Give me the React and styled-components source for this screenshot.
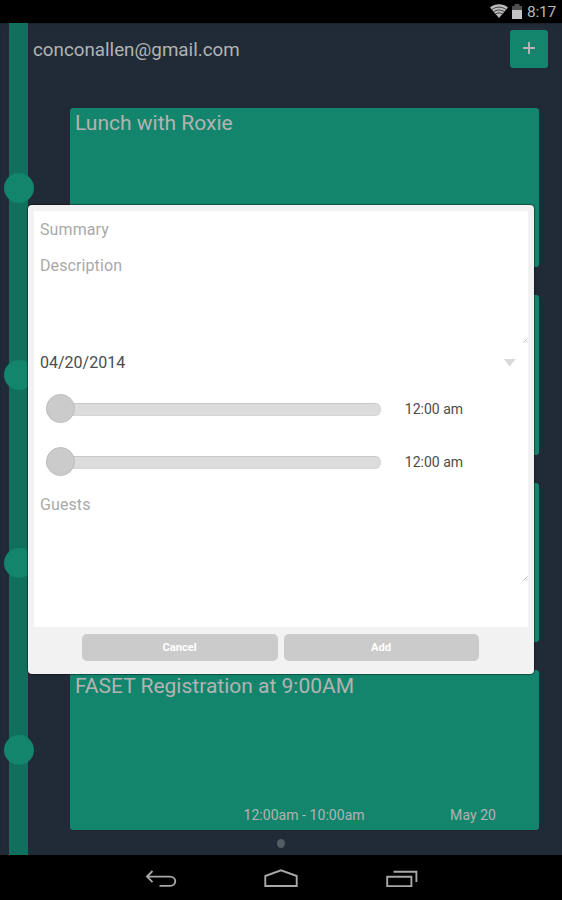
import React from "react";
import styled, { createGlobalStyle } from "styled-components";

const GlobalStyle = createGlobalStyle`
  *, *::before, *::after { box-sizing: border-box; }
  body { margin: 0; background: #000; font-family: Roboto, "Liberation Sans", sans-serif; }
`;

const Screen = styled.div`
  display: flex;
  flex-direction: column;
  width: 562px;
  height: 900px;
  overflow: hidden;
  background: #000;
`;

const StatusBar = styled.header`
  display: flex;
  justify-content: flex-end;
  flex: none;
  height: 23px;
  padding: 4px 6px 0 0;
  svg { display: block; flex: none; }
`;

const StatusIcons = styled.span`
  display: flex;
  gap: 4.3px;
`;

const Clock = styled.time`
  margin-left: 5px;
  font-size: 15.5px;
  line-height: 17px;
  letter-spacing: -0.2px;
  color: #b8b8b8;
`;

const Main = styled.main`
  position: relative;
  display: flex;
  flex: none;
  height: 832px;
  overflow: hidden;
  background: #202b37;
  box-shadow: inset 0 1px 1px #18232c;
`;

const Rail = styled.div`
  display: flex;
  flex-direction: column;
  align-items: center;
  flex: none;
  gap: 157.5px;
  width: 18.7px;
  margin-left: 9.3px;
  padding-top: 149.5px;
  background: #11705d;
`;

const RailDot = styled.span`
  flex: none;
  width: 30px;
  height: 30px;
  border-radius: 50%;
  background: #13856d;
`;

const Content = styled.div`
  display: flex;
  flex-direction: column;
  flex: 1;
`;

const AccountBar = styled.div`
  display: flex;
  justify-content: space-between;
  flex: none;
  height: 84.7px;
  padding: 7px 14px 0 5px;
`;

const Email = styled.span`
  margin-top: 8px;
  font-size: 18.8px;
  line-height: 24px;
  color: #b3b3b3;
`;

const PlusButton = styled.button`
  display: grid;
  place-items: center;
  width: 37.7px;
  height: 37.6px;
  padding: 0;
  border: 0;
  border-radius: 3px;
  background: #13856d;
`;

const EventList = styled.div`
  display: flex;
  flex-direction: column;
  gap: 28px;
  margin-left: 42px;
  width: 469px;
`;

const EventCard = styled.article`
  display: flex;
  flex-direction: column;
  justify-content: space-between;
  height: 159.5px;
  padding: 2.4px 5px 5px;
  border-radius: 3px;
  background: #13856d;
  color: #b3b3b3;
`;

const EventTitle = styled.h2`
  margin: 0;
  font-size: 21px;
  font-weight: 400;
  line-height: 27px;
`;

const EventMeta = styled.div`
  display: flex;
  justify-content: space-between;
  padding: 0 38px 0 168.5px;
  font-size: 14px;
  line-height: 19px;
  letter-spacing: 0.05px;
`;

const PageDot = styled.span`
  width: 8px;
  height: 9px;
  margin: 9px 0 0 249px;
  border-radius: 50%;
  background: #545c65;
`;

const Dialog = styled.section`
  position: absolute;
  top: 182.3px;
  left: 28px;
  width: 506px;
  height: 468.7px;
  padding: 6px 6px 0;
  border-radius: 4px;
  background: #f2f2f2;
  box-shadow: 0 0 1px 1px rgba(0, 0, 0, 0.4);
`;

const Form = styled.form`
  display: flex;
  flex-direction: column;
  height: 416px;
  padding-left: 6px;
  background: #fff;
  font-size: 16px;
  line-height: 20px;
  color: #4c4c4c;
`;

const Field = styled.div`
  display: flex;
  justify-content: space-between;
  flex: none;
  height: ${(p) => p.$height}px;
  padding-top: ${(p) => p.$top}px;
  color: ${(p) => (p.$filled ? "#4c4c4c" : "#a9a9a9")};
  letter-spacing: ${(p) => (p.$filled ? 0 : 0.1)}px;
`;

const Resizer = styled.svg`
  align-self: flex-end;
  flex: none;
  width: 5px;
  height: 5px;
  margin-bottom: 1px;
`;

const Caret = styled.span`
  width: 12px;
  height: 7.5px;
  margin: 6px 12.3px 0 0;
  background: #dadada;
  clip-path: polygon(0 0, 100% 0, 50% 100%);
`;

const SliderRow = styled.div`
  display: flex;
  align-items: center;
  flex: none;
  height: ${(p) => p.$height}px;
  padding-left: 6px;
`;

const Track = styled.div`
  display: flex;
  align-items: center;
  width: 335px;
  height: 12.5px;
  border: 1px solid #d6d6d6;
  border-top-color: #c8c8c8;
  border-radius: 6px;
  background: #dcdcdc;
`;

const Thumb = styled.span`
  width: 29.3px;
  height: 29.3px;
  margin-left: -1px;
  margin-top: -1.6px;
  flex: none;
  border: 1px solid #bdbdbd;
  border-radius: 50%;
  background: #cbcbcb;
`;

const SliderTime = styled.span`
  margin: 0 0 0 23.8px;
  font-size: 14px;
`;

const Actions = styled.footer`
  display: flex;
  gap: 5.7px;
  padding: 6.5px 0 0 48.3px;
`;

const ActionButton = styled.button`
  width: 195.7px;
  height: 27.3px;
  padding: 1px 1px 0 0;
  border: 0;
  border-radius: 5px;
  background: #cbcbcb;
  color: #fff;
  font: 700 11.2px/20px Roboto, sans-serif;
`;

const NavBar = styled.nav`
  display: flex;
  justify-content: center;
  gap: 86.5px;
  height: 45px;
  padding-top: 12px;
  svg { display: block; fill: none; stroke: #a8a8a8; stroke-width: 1.9; }
`;

const Grip = () => (
  <Resizer viewBox="0 0 5 5" aria-hidden="true">
    <path d="M.5 4.5 4.5.5M3 4.5 4.5 3" stroke="#a9a9a9" strokeWidth=".8" fill="none" />
  </Resizer>
);

const WifiIcon = () => (
  <svg width="18" height="15" viewBox="0 0 18 15">
    <path d="M0 3.4C5-.9 13-.9 18 3.4L9 14Z" fill="#bcbcbc" />
    <path
      d="M1.7 5.7c4-3.4 10.6-3.4 14.6 0M3.5 8c3-2.6 8-2.6 11 0M5.3 10.2c2-1.8 5.4-1.8 7.4 0"
      fill="none"
      stroke="#222"
      strokeWidth=".8"
    />
  </svg>
);

const BatteryIcon = () => (
  <svg width="10" height="15" viewBox="0 0 10 15">
    <path d="M2.500 0h5v2H10v13H0V2h2.500Z" fill="#505050" />
    <path d="M0 6h10v9H0Z" fill="#c3c3c3" />
  </svg>
);

const events = [
  { title: "Lunch with Roxie" },
  {},
  {},
  { title: "FASET Registration at 9:00AM", time: "12:00am - 10:00am", date: "May 20" },
];

export default function App() {
  return (
    <>
      <GlobalStyle />
      <Screen>
        <StatusBar>
          <StatusIcons>
            <WifiIcon />
            <BatteryIcon />
          </StatusIcons>
          <Clock>8:17</Clock>
        </StatusBar>
        <Main>
          <Rail>
            {events.map((_, i) => <RailDot key={i} />)}
          </Rail>
          <Content>
            <AccountBar>
              <Email>conconallen@gmail.com</Email>
              <PlusButton aria-label="Add event">
                <svg width="12" height="13" viewBox="0 0 12 13">
                  <path d="M6 0v12M0 6h12" stroke="#b3b3b3" strokeWidth="2" />
                </svg>
              </PlusButton>
            </AccountBar>
            <EventList>
              {events.map((event, i) => (
                <EventCard key={i}>
                  {event.title && <EventTitle>{event.title}</EventTitle>}
                  {event.time && (
                    <EventMeta>
                      <span>{event.time}</span>
                      <span>{event.date}</span>
                    </EventMeta>
                  )}
                </EventCard>
              ))}
            </EventList>
            <PageDot />
          </Content>
          <Dialog role="dialog">
            <Form>
              <Field $height={36} $top={8.7}>Summary</Field>
              <Field $height={97} $top={9}>Description<Grip /></Field>
              <Field $height={38} $top={8.700} $filled>04/20/2014<Caret /></Field>
              <SliderRow $height={54}>
                <Track><Thumb /></Track>
                <SliderTime>12:00 am</SliderTime>
              </SliderRow>
              <SliderRow $height={52}>
                <Track><Thumb /></Track>
                <SliderTime>12:00 am</SliderTime>
              </SliderRow>
              <Field $height={94} $top={6.5}>Guests<Grip /></Field>
            </Form>
            <Actions>
              <ActionButton>Cancel</ActionButton>
              <ActionButton>Add</ActionButton>
            </Actions>
          </Dialog>
        </Main>
        <NavBar>
          <svg width="34" height="22" viewBox="0 0 34 22">
            <path d="M8.500 4 3 9.600l5.500 5.600M3 9.600h23c7 0 7 9.300 0 9.300H15.500" />
          </svg>
          <svg width="34" height="22" viewBox="0 0 34 22">
            <path d="M1.300 19V9L17 3.300 32.700 9v10Z" />
          </svg>
          <svg width="34" height="22" viewBox="0 0 34 22">
            <path d="M2.200 9.700h24.200v9.400H2.200ZM8.500 4.800h22.900V15" />
          </svg>
        </NavBar>
      </Screen>
    </>
  );
}
